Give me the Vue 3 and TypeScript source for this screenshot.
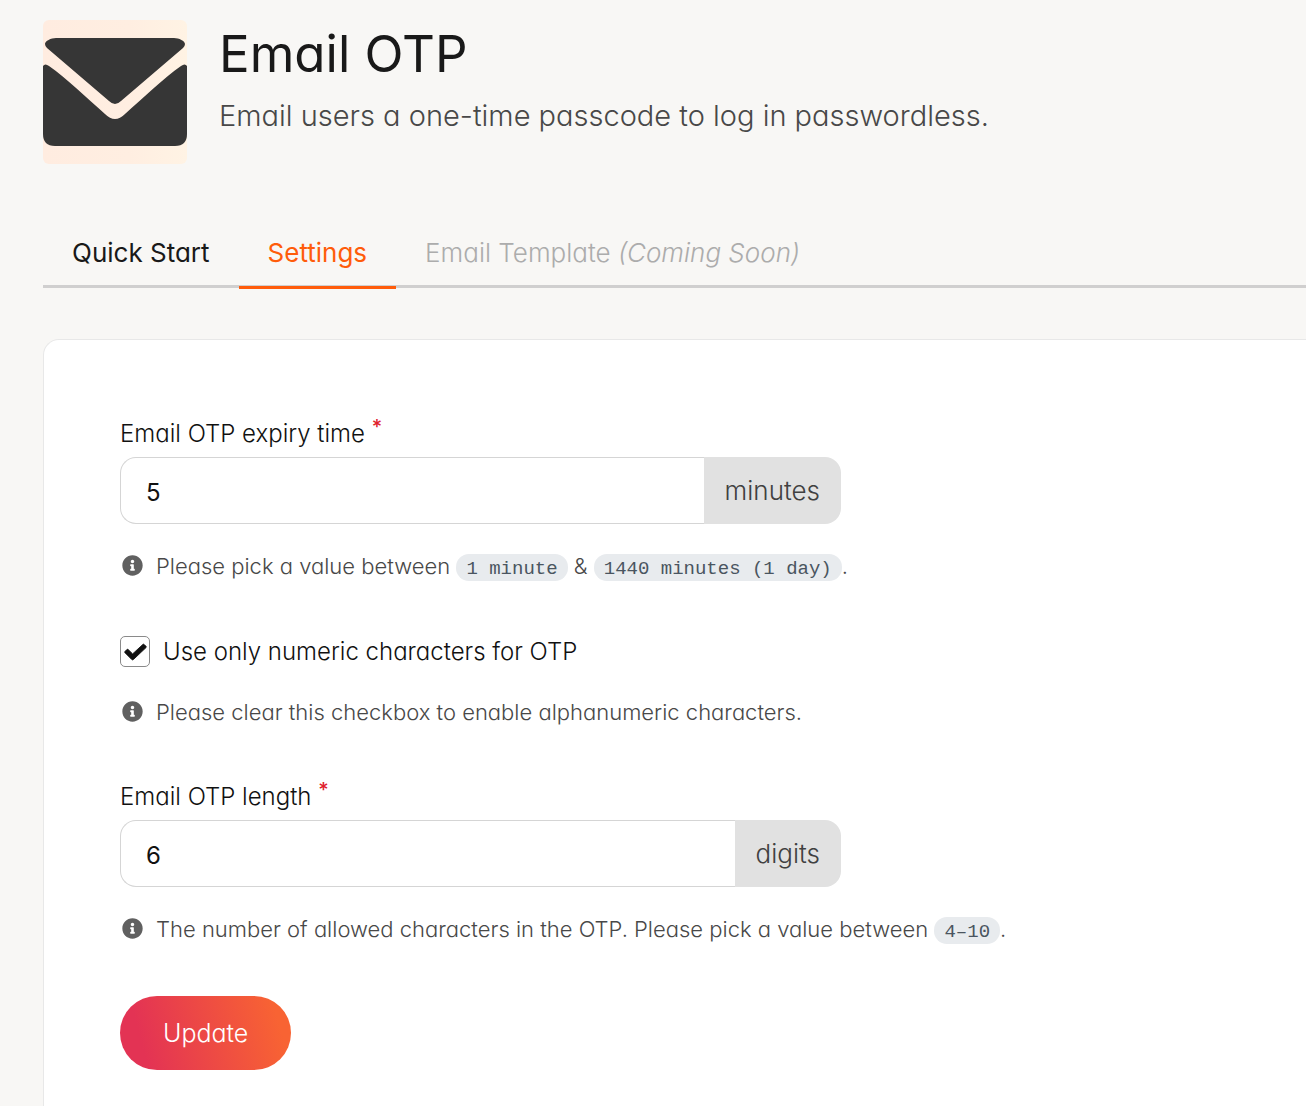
<script setup lang="ts">
import { ref } from 'vue'

const expiry = ref('5')
const length = ref('6')
const numericOnly = ref(true)

const infoPath =
  'M256 8C119 8 8 119 8 256s111 248 248 248 248-111 248-248S393 8 256 8zm0 110c23 0 42 19 42 42s-19 42-42 42-42-19-42-42 19-42 42-42zm56 254c0 7-5 12-12 12h-88c-7 0-12-5-12-12v-24c0-7 5-12 12-12h12v-64h-12c-7 0-12-5-12-12v-24c0-7 5-12 12-12h64c7 0 12 5 12 12v100h12c7 0 12 5 12 12v24z'
</script>

<template>
  <main class="page">
    <header class="hero">
      <svg class="hero-icon" viewBox="0 0 144 144" aria-hidden="true">
        <defs>
          <linearGradient id="tile" x1="0" y1="0" x2="1" y2="0">
            <stop offset="0" stop-color="#ffece0" />
            <stop offset="0.6" stop-color="#ffeee1" />
            <stop offset="1" stop-color="#fff3e4" />
          </linearGradient>
        </defs>
        <rect width="144" height="144" rx="6" fill="url(#tile)" />
        <path d="M13 18H131C136 18 142 21 142 24Q142 26 140 28L78 81Q72 87 66 81L4 28Q2 26 2 24C2 21 8 18 13 18Z" fill="#363636" />
        <path d="M0 46Q2 43 6 46C23 58 44 78 62 94Q72 104 82 94C100 78 121 58 138 46Q142 43 144 46V114Q144 126 132 126H12Q0 126 0 114Z" fill="#363636" />
      </svg>
      <div class="hero-text">
        <h1>Email OTP</h1>
        <p>Email users a one-time passcode to log in passwordless.</p>
      </div>
    </header>

    <nav class="tabs">
      <a href="#quick-start" class="tab">Quick Start</a>
      <a href="#settings" class="tab active" aria-current="page">Settings</a>
      <span class="tab disabled">Email Template <em>(Coming Soon)</em></span>
    </nav>

    <form class="card" @submit.prevent>
      <section class="field">
        <label class="field-label" for="expiry">Email OTP expiry time <span class="required">*</span></label>
        <div class="input-group">
          <input id="expiry" v-model="expiry" type="text" inputmode="numeric" />
          <span class="unit">minutes</span>
        </div>
        <p class="hint">
          <svg class="info" viewBox="0 0 512 512" aria-hidden="true"><path :d="infoPath" fill="currentColor" /></svg>
          <span>Please pick a value between <code>1 minute</code> &amp; <code>1440 minutes (1 day)</code>.</span>
        </p>
      </section>

      <section class="field">
        <label class="check">
          <input v-model="numericOnly" type="checkbox" />
          <span>Use only numeric characters for OTP</span>
        </label>
        <p class="hint">
          <svg class="info" viewBox="0 0 512 512" aria-hidden="true"><path :d="infoPath" fill="currentColor" /></svg>
          <span>Please clear this checkbox to enable alphanumeric characters.</span>
        </p>
      </section>

      <section class="field">
        <label class="field-label" for="length">Email OTP length <span class="required">*</span></label>
        <div class="input-group">
          <input id="length" v-model="length" type="text" inputmode="numeric" />
          <span class="unit">digits</span>
        </div>
        <p class="hint">
          <svg class="info" viewBox="0 0 512 512" aria-hidden="true"><path :d="infoPath" fill="currentColor" /></svg>
          <span>The number of allowed characters in the OTP. Please pick a value between <code>4–10</code>.</span>
        </p>
      </section>

      <button type="submit" class="update">Update</button>
    </form>
  </main>
</template>

<style>
body {
  margin: 0;
  background: #f8f7f5;
}
#app {
  display: flow-root;
}
</style>

<style scoped>
.page {
  box-sizing: border-box;
  min-height: 100vh;
  padding: 20px 0 0 43px;
  display: flex;
  flex-direction: column;
  font-family: Inter, "Liberation Sans", sans-serif;
  font-weight: 300;
  font-feature-settings: "cv11";
  color: #111;
}
.hero {
  display: flex;
  gap: 32px;
}
.hero-icon {
  width: 144px;
  height: 144px;
  flex: none;
}
h1 {
  margin: 0;
  font-size: 51px;
  line-height: 68px;
  font-weight: 400;
  color: #191919;
}
.hero-text p {
  margin: 8px 0 0;
  font-size: 29px;
  line-height: 40px;
  color: #484848;
}
.tabs {
  display: flex;
  margin-top: 56px;
  border-bottom: 3px solid #d0cfcf;
}
.tab {
  padding: 16px 29px;
  margin-bottom: -4px;
  border-bottom: 3px solid transparent;
  font-size: 26px;
  font-weight: 400;
  line-height: 34px;
  color: #191919;
  text-decoration: none;
  white-space: nowrap;
}
.tab.active {
  color: #ff5c0a;
  border-color: #ff5c0a;
}
.tab.disabled {
  color: #acacac;
  font-weight: 300;
}
.card {
  flex: 1;
  margin-top: 51px;
  padding: 76px 76px 36px;
  border: 1px solid #e8e8e8;
  border-right: 0;
  border-bottom: 0;
  border-radius: 16px 0 0 0;
  background: #fff;
}
.field {
  display: flex;
  flex-direction: column;
  align-items: flex-start;
  margin-bottom: 51px;
}
.field-label {
  font-size: 24px;
  line-height: 36px;
  margin-bottom: 5px;
}
.required {
  color: #e0202b;
  font-size: 20px;
  font-weight: 500;
  line-height: 0;
  vertical-align: 8px;
}
.input-group {
  display: flex;
  width: 100%;
  max-width: 721px;
  height: 67px;
}
.input-group input {
  box-sizing: border-box;
  flex: 1;
  min-width: 0;
  padding: 3px 25px 0;
  border: 1px solid #d5d5d5;
  border-right: 0;
  border-radius: 16px 0 0 16px;
  background: #fff;
  font: inherit;
  font-feature-settings: inherit;
  font-size: 24px;
  font-weight: 400;
  color: inherit;
  outline: 0;
}
.unit {
  display: flex;
  align-items: center;
  padding: 0 21px;
  border-radius: 0 16px 16px 0;
  background: #e1e1e1;
  color: #404040;
  font-size: 26px;
}
.hint {
  display: flex;
  margin: 26px 0 0 2px;
  gap: 13px;
  font-size: 22px;
  line-height: 32px;
  color: #484848;
}
.info {
  flex: none;
  width: 21px;
  height: 21px;
  margin-top: 5px;
  color: #606060;
}
code {
  padding: 4px 10px 1px;
  border-radius: 13px;
  background: #e8ebee;
  color: #4a5560;
  font-family: "Liberation Mono", monospace;
  font-size: 19px;
  font-weight: 400;
  line-height: 1;
}
.check {
  display: flex;
  align-items: center;
  gap: 13px;
  font-size: 24px;
  line-height: 37px;
}
.check input {
  appearance: none;
  box-sizing: border-box;
  width: 30px;
  height: 31px;
  margin: 0;
  border: 1px solid #8a8a8a;
  border-radius: 5px;
  background: #fff;
}
.check input:checked {
  background: #fff url('data:image/svg+xml,<svg xmlns="http://www.w3.org/2000/svg" viewBox="0 64 512 384"><path d="M174 424L22 272c-8-8-8-20 0-28l42-42c8-8 20-8 28 0L192 298 420 88c8-8 20-8 28 0l42 42c8 8 8 20 0 28L208 424c-10 10-24 10-34 0z" fill="%23111" stroke="%23111" stroke-width="20"/></svg>') center / 23px 18px no-repeat;
}
.update {
  padding: 0 43px;
  height: 74px;
  border: 0;
  border-radius: 37px;
  background: linear-gradient(75deg, #e33354 15%, #f86333 90%);
  color: #fff;
  font: inherit;
  font-feature-settings: inherit;
  font-size: 25px;
}
</style>
